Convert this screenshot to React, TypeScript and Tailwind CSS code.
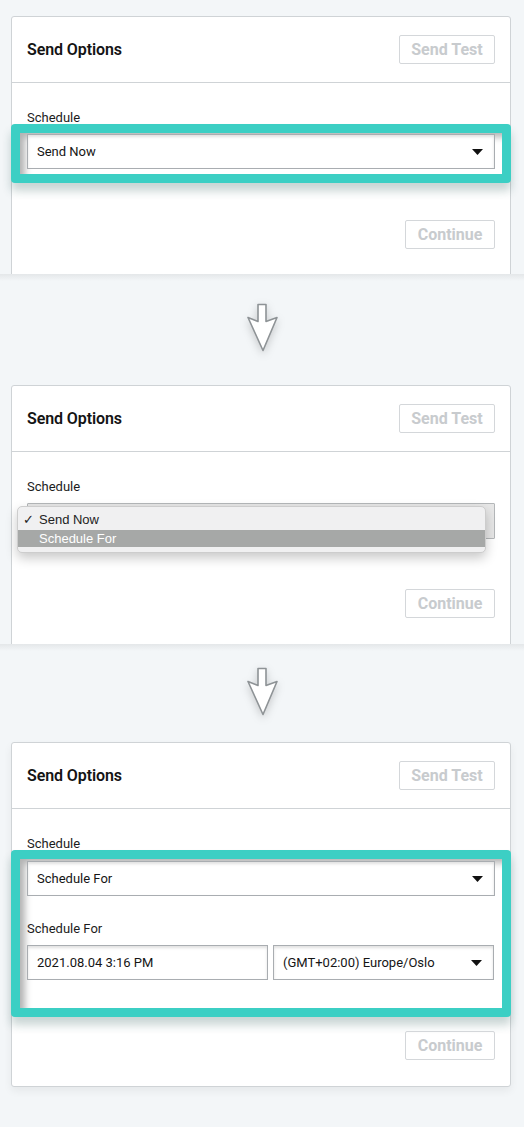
import React from "react";

const Caret = () => (
  <svg width="11" height="6" viewBox="0 0 11 6" className="shrink-0">
    <path d="M0 0 H11 L5.5 6 Z" fill="#111" />
  </svg>
);

const Arrow = () => (
  <svg width="34" height="50" viewBox="0 0 34 50" className="drop-shadow-[0_3px_4px_rgba(0,0,0,0.18)]">
    <path
      d="M12 1.5 H20 V18.5 L31 14.5 L17 47.5 L2 14.5 L12 18.5 Z"
      fill="#ffffff"
      stroke="#8e9396"
      strokeWidth="1.6"
      strokeLinejoin="round"
    />
  </svg>
);

const Header = () => (
  <div className="h-[66px] border-b border-[#cfd3d6] flex items-center justify-between px-[15px]">
    <div className="text-[16px] font-semibold text-[#141414] tracking-[-0.1px]">Send Options</div>
    <div className="w-[96px] h-[29px] border border-[#d4d7da] rounded-[2px] flex items-center justify-center text-[16px] font-bold text-[#c8cbce]">
      Send Test
    </div>
  </div>
);

const ContinueBtn = ({ mt }: { mt: string }) => (
  <div className={`flex justify-end ${mt}`}>
    <div className="w-[90px] h-[29px] border border-[#d4d7da] rounded-[2px] flex items-center justify-center text-[16px] font-bold text-[#c8cbce]">
      Continue
    </div>
  </div>
);

const Select = ({ value, className = "" }: { value: string; className?: string }) => (
  <div
    className={`h-[35px] bg-white border border-[#a9adb1] shadow-[inset_0_2px_3px_rgba(0,0,0,0.12)] flex items-center justify-between pl-[9px] pr-[11px] text-[13px] text-[#151515] ${className}`}
  >
    <span>{value}</span>
    <Caret />
  </div>
);

const Label = ({ children }: { children: React.ReactNode }) => (
  <div className="h-[16px] leading-[16px] text-[13px] text-[#1c1c1c]">{children}</div>
);

const Band = () => <div className="h-[7px] bg-gradient-to-b from-[#e4e7e9] to-[#f3f6f8]" />;

export default function App() {
  return (
    <div className="w-[524px] h-[1127px] overflow-hidden bg-[#f3f6f8] font-['Roboto',sans-serif]">
      {/* Section 1 */}
      <div className="h-[274px] overflow-hidden pt-[16px] px-[11px]">
        <div className="w-[500px] h-[300px] bg-white border border-[#cfd3d6] rounded-[3px]">
          <Header />
          <div className="px-[15px] pt-[27px]">
            <Label>Schedule</Label>
            <div className="-mx-[16px] mt-[-2px] border-[9px] border-[#3ccfc4] rounded-[4px] bg-white pt-[1px] pb-[5px] px-[7px] shadow-[inset_8px_7px_7px_-3px_rgba(0,0,0,0.3),0_8px_10px_rgba(30,80,75,0.24)]">
              <Select value="Send Now" />
            </div>
            <ContinueBtn mt="mt-[37px]" />
          </div>
        </div>
      </div>
      <Band />
      {/* Arrow 1 */}
      <div className="h-[99px] flex justify-center pt-[22px] pl-[1px]">
        <Arrow />
      </div>
      {/* Section 2 */}
      <div className="h-[264px] overflow-hidden pt-[5px] px-[11px]">
        <div className="w-[500px] h-[300px] bg-white border border-[#cfd3d6] rounded-[3px]">
          <Header />
          <div className="px-[15px] pt-[27px]">
            <Label>Schedule</Label>
            <div className="relative mt-[8px]">
              <div className="h-[36px] bg-[#e7e7e7] border border-[#b4b7b9] rounded-[1px]" />
              <div className="absolute left-[-10px] top-[3px] w-[469px] bg-[#f0f0f1] border border-[#cdcdcd] rounded-[5px] shadow-[0_5px_12px_rgba(0,0,0,0.22)] pt-[3px] pb-[5px] text-[13px] font-['Liberation_Sans',sans-serif]">
                <div className="h-[20px] flex items-center text-[#222]">
                  <span className="w-[20px] pl-[5px] text-[13px]">✓</span>
                  <span className="ml-[1px]">Send Now</span>
                </div>
                <div className="h-[17px] flex items-center bg-[#a6a8a7] text-white">
                  <span className="w-[20px]" />
                  <span className="ml-[1px]">Schedule For</span>
                </div>
              </div>
            </div>
            <ContinueBtn mt="mt-[50px]" />
          </div>
        </div>
      </div>
      <Band />
      {/* Arrow 2 */}
      <div className="h-[80px] flex justify-center pt-[16px] pl-[1px]">
        <Arrow />
      </div>
      {/* Section 3 */}
      <div className="pt-[11px] px-[11px]">
        <div className="w-[500px] bg-white border border-[#cfd3d6] rounded-[3px] shadow-[0_4px_8px_rgba(0,0,0,0.06)]">
          <Header />
          <div className="px-[15px] pt-[27px] pb-[26px]">
            <Label>Schedule</Label>
            <div className="-mx-[16px] mt-[-2px] border-[9px] border-[#3ccfc4] rounded-[4px] bg-white pt-[2px] pb-[28px] px-[7px] shadow-[inset_8px_7px_7px_-3px_rgba(0,0,0,0.3),0_8px_10px_rgba(30,80,75,0.24)]">
              <Select value="Schedule For" />
              <div className="mt-[25px]">
                <Label>Schedule For</Label>
              </div>
              <div className="mt-[8px] flex gap-[5px] pr-[1px]">
                <div className="w-[241px] h-[35px] bg-white border border-[#a9adb1] shadow-[inset_0_2px_3px_rgba(0,0,0,0.12)] flex items-center pl-[9px] text-[13px] text-[#151515]">
                  2021.08.04 3:16 PM
                </div>
                <Select value="(GMT+02:00) Europe/Oslo" className="flex-1 pl-[8px]" />
              </div>
            </div>
            <ContinueBtn mt="mt-[14px]" />
          </div>
        </div>
      </div>
    </div>
  );
}
